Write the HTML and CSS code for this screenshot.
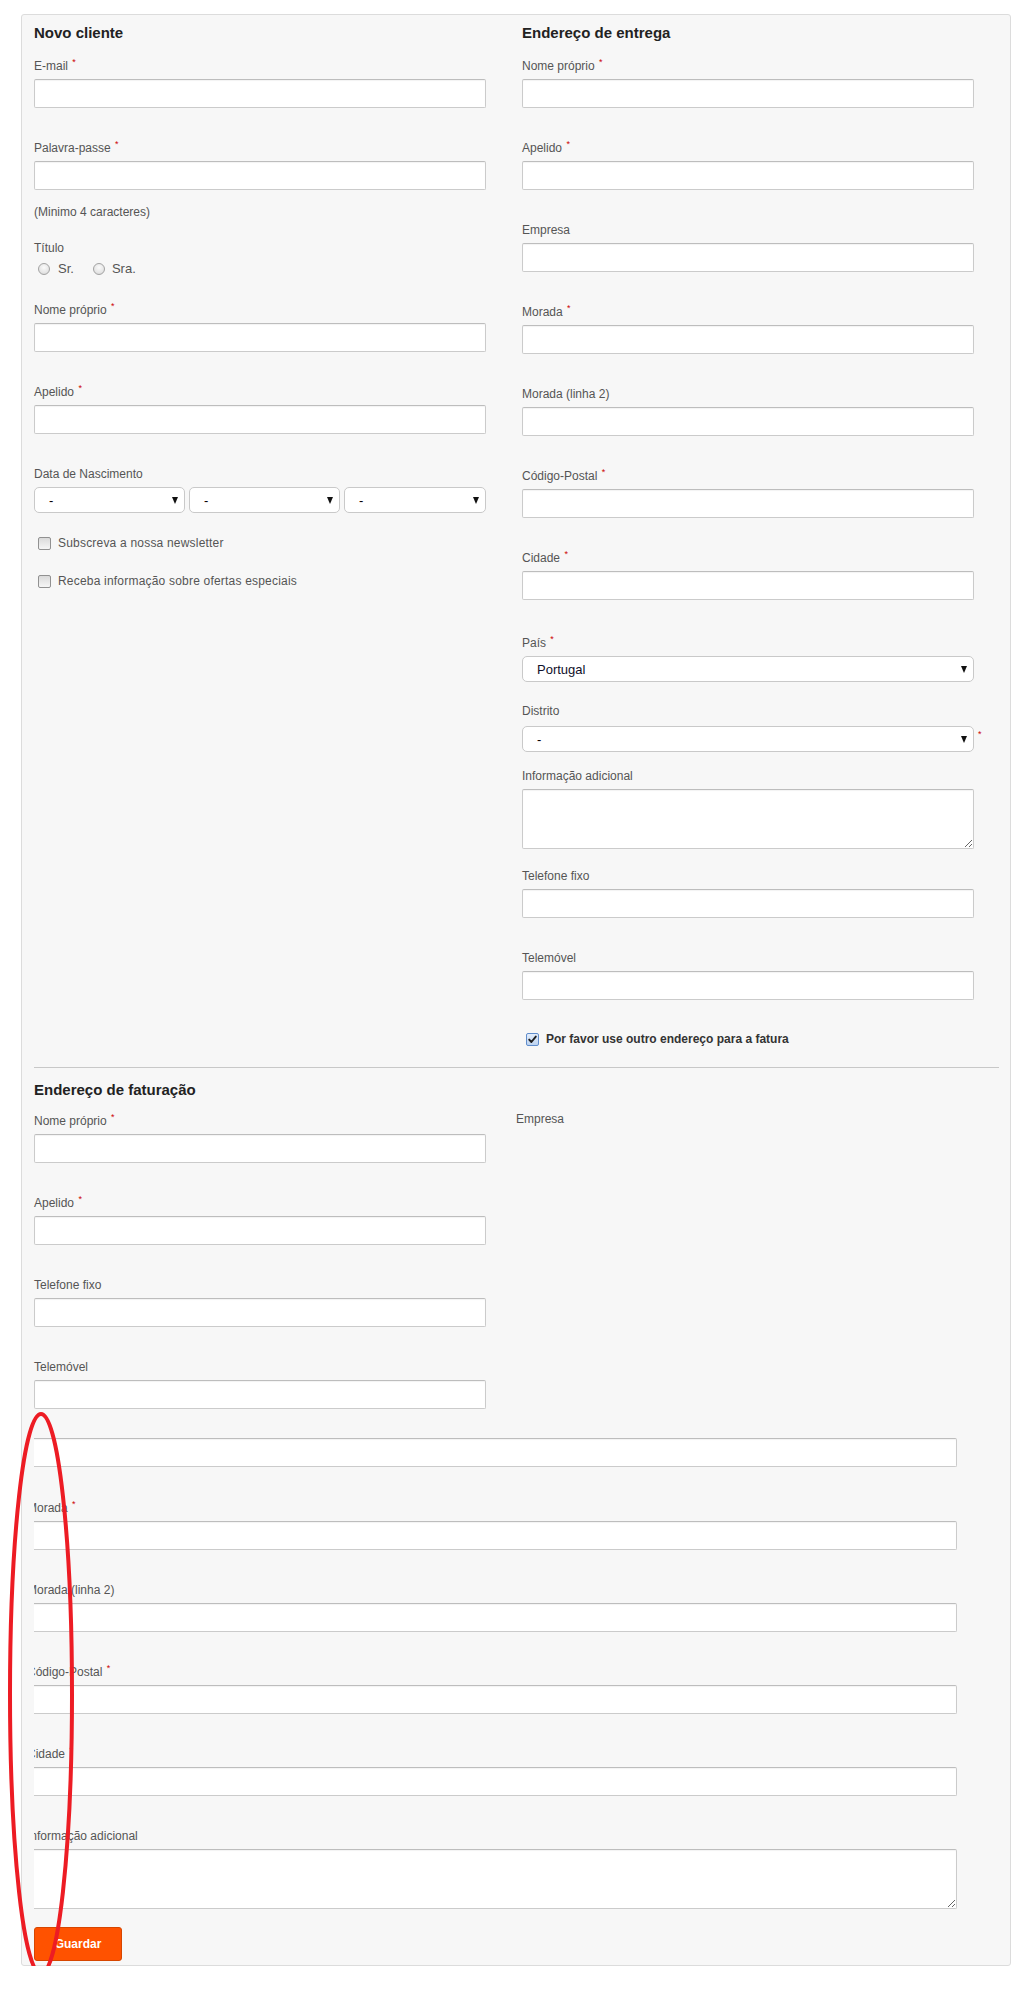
FILE: index.html
```html
<!DOCTYPE html>
<html lang="pt">
<head>
<meta charset="utf-8">
<title>Registo</title>
<link rel="stylesheet" href="styles.css">
</head>
<body>
<div class="page">
  <form class="box">
    <div class="cols">
      <div class="col">
        <h3 class="ttl">Novo cliente</h3>
        <div class="fld"><label class="lbl">E-mail <sup class="req">*</sup></label><input class="inp" type="text"></div>
        <div class="fld fld-tight"><label class="lbl">Palavra-passe <sup class="req">*</sup></label><input class="inp" type="password"></div>
        <p class="hint">(Minimo 4 caracteres)</p>
        <div class="titulo">
          <span class="lbl">Título</span>
          <div class="radios">
            <span class="rad"></span><span class="rtxt">Sr.</span>
            <span class="rad rad-2"></span><span class="rtxt rtxt-2">Sra.</span>
          </div>
        </div>
        <div class="fld fld-after-radios"><label class="lbl">Nome próprio <sup class="req">*</sup></label><input class="inp" type="text"></div>
        <div class="fld"><label class="lbl">Apelido <sup class="req">*</sup></label><input class="inp" type="text"></div>
        <div class="fld-date">
          <label class="lbl">Data de Nascimento</label>
          <div class="dates">
            <div class="sel-wrap sel-d1"><select class="sel"><option>-</option></select></div>
            <div class="sel-wrap sel-d2"><select class="sel"><option>-</option></select></div>
            <div class="sel-wrap sel-d3"><select class="sel"><option>-</option></select></div>
          </div>
        </div>
        <div class="chk-row"><span class="cb"></span><span class="chk-txt">Subscreva a nossa newsletter</span></div>
        <div class="chk-row"><span class="cb"></span><span class="chk-txt">Receba informação sobre ofertas especiais</span></div>
      </div>

      <div class="col">
        <h3 class="ttl">Endereço de entrega</h3>
        <div class="fld"><label class="lbl">Nome próprio <sup class="req">*</sup></label><input class="inp" type="text"></div>
        <div class="fld"><label class="lbl">Apelido <sup class="req">*</sup></label><input class="inp" type="text"></div>
        <div class="fld"><label class="lbl">Empresa</label><input class="inp" type="text"></div>
        <div class="fld"><label class="lbl">Morada <sup class="req">*</sup></label><input class="inp" type="text"></div>
        <div class="fld"><label class="lbl">Morada (linha 2)</label><input class="inp" type="text"></div>
        <div class="fld"><label class="lbl">Código-Postal <sup class="req">*</sup></label><input class="inp" type="text"></div>
        <div class="fld fld-before-sel"><label class="lbl">Cidade <sup class="req">*</sup></label><input class="inp" type="text"></div>
        <div class="fld-sel">
          <label class="lbl">País <sup class="req">*</sup></label>
          <div class="sel-wrap"><select class="sel sel-big"><option>Portugal</option></select></div>
        </div>
        <div class="fld-sel fld-sel-2">
          <label class="lbl">Distrito</label>
          <div class="sel-line">
            <div class="sel-wrap"><select class="sel"><option>-</option></select></div>
            <span class="req-out">*</span>
          </div>
        </div>
        <div class="fld-txt">
          <label class="lbl">Informação adicional</label>
          <textarea class="txt"></textarea>
        </div>
        <div class="fld fld-after-txt"><label class="lbl">Telefone fixo</label><input class="inp" type="text"></div>
        <div class="fld fld-last-r"><label class="lbl">Telemóvel</label><input class="inp" type="text"></div>
        <div class="chk-row chk-row-r">
          <span class="cb cb-on"><svg viewBox="0 0 11 11" width="11" height="11"><path d="M2.2 5.6 L4.4 8 L8.8 2.6" fill="none" stroke="#1e1e1e" stroke-width="1.9" stroke-linecap="round" stroke-linejoin="round"/></svg></span>
          <span class="chk-txt chk-bold">Por favor use outro endereço para a fatura</span>
        </div>
      </div>
    </div>

    <hr class="sep">

    <h3 class="ttl ttl-2">Endereço de faturação</h3>
    <div class="cols">
      <div class="col">
        <div class="fld"><label class="lbl">Nome próprio <sup class="req">*</sup></label><input class="inp" type="text"></div>
        <div class="fld"><label class="lbl">Apelido <sup class="req">*</sup></label><input class="inp" type="text"></div>
        <div class="fld"><label class="lbl">Telefone fixo</label><input class="inp" type="text"></div>
        <div class="fld fld-end"><label class="lbl">Telemóvel</label><input class="inp" type="text"></div>
      </div>
      <div class="col">
        <span class="lbl lbl-empresa">Empresa</span>
      </div>
    </div>

    <div class="clip">
      <div class="clip-in">
        <input class="inp inp-first" type="text">
        <div class="fld"><label class="lbl">Morada <sup class="req">*</sup></label><input class="inp" type="text"></div>
        <div class="fld"><label class="lbl">Morada (linha 2)</label><input class="inp" type="text"></div>
        <div class="fld"><label class="lbl">Código-Postal <sup class="req">*</sup></label><input class="inp" type="text"></div>
        <div class="fld"><label class="lbl">Cidade <sup class="req">*</sup></label><input class="inp" type="text"></div>
        <div class="fld-txt-b"><label class="lbl">Informação adicional</label><textarea class="txt"></textarea></div>
      </div>
    </div>

    <button class="btn" type="button">Guardar</button>
  </form>

  <svg class="mark" viewBox="0 0 90 580" width="90" height="580">
    <ellipse cx="41" cy="289" rx="31" ry="280" fill="none" stroke="#ed1c24" stroke-width="4"/>
  </svg>
</div>
</body>
</html>
```

FILE: styles.css
```css
* { box-sizing: border-box; }

html, body {
  margin: 0;
  padding: 0;
  background: #fff;
}

body {
  font-family: "Liberation Sans", Arial, Helvetica, sans-serif;
  font-size: 12px;
  color: #555;
}

.page {
  position: relative;
  padding-top: 14px;
}

.box {
  width: 990px;
  margin: 0 0 0 21px;
  padding: 9px 11px 4px 12px;
  background: #f7f7f7;
  border: 1px solid #dcdcdc;
  border-radius: 3px;
}

.cols {
  display: grid;
  grid-template-columns: 488px 477px;
  align-items: start;
}

.ttl {
  margin: 0 0 16px;
  font-size: 15px;
  line-height: 18px;
  font-weight: bold;
  color: #222;
}

.ttl-2 { margin-bottom: 14px; }

.lbl {
  display: block;
  font-size: 12px;
  line-height: 16px;
  color: #555;
  margin: 0 0 5px;
  white-space: nowrap;
}

.req {
  color: #c00;
  font-size: 9px;
  line-height: 0;
  vertical-align: 5px;
  margin-left: 1px;
}

.inp {
  display: block;
  width: 452px;
  height: 29px;
  margin: 0;
  padding: 0 6px;
  border: 1px solid #cbcbcb;
  border-top-color: #bdbdbd;
  border-radius: 2px;
  background: #fff;
  box-shadow: inset 0 1px 1px rgba(0, 0, 0, 0.05);
  font: inherit;
}

.fld { margin-bottom: 32px; }
.fld-tight { margin-bottom: 0; }

.hint {
  margin: 14px 0 0;
  line-height: 16px;
  font-size: 12px;
  color: #555;
}

.titulo { margin-top: 20px; }

.radios {
  display: flex;
  align-items: center;
  height: 16px;
  margin-top: 2px;
  padding-left: 4px;
}

.rad {
  width: 12px;
  height: 12px;
  border-radius: 50%;
  border: 1px solid #a3a3a3;
  background: radial-gradient(circle at 50% 35%, #fbfbfb 0%, #e6e6e6 60%, #d2d2d2 100%);
  flex: none;
}

.rtxt {
  margin-left: 8px;
  font-size: 13px;
  line-height: 16px;
  color: #555;
}

.rad-2 { margin-left: 19px; }
.rtxt-2 { margin-left: 7px; }

.fld-after-radios { margin-top: 25px; }

.fld-date .dates {
  display: flex;
  gap: 4px;
  margin-top: 2px;
}

.sel-wrap {
  position: relative;
  width: 452px;
}

.sel-wrap::after {
  content: "";
  position: absolute;
  right: 7px;
  top: 50%;
  margin-top: -3px;
  width: 0;
  height: 0;
  border-left: 3.5px solid transparent;
  border-right: 3.5px solid transparent;
  border-top: 7px solid #111;
  pointer-events: none;
}

.sel-d1, .sel-d2 { width: 151px; }
.sel-d3 { width: 142px; }

.sel {
  -webkit-appearance: none;
  appearance: none;
  display: block;
  width: 100%;
  height: 26px;
  margin: 0;
  padding: 0 20px 0 14px;
  border: 1px solid #c9c9c9;
  border-radius: 5px;
  background: #fff;
  font-family: "Liberation Sans", Arial, Helvetica, sans-serif;
  font-size: 13px;
  color: #000;
}

.sel-big { color: #10102a; }

.chk-row {
  display: flex;
  align-items: center;
  height: 16px;
  margin-top: 22px;
  padding-left: 4px;
}

.cb {
  width: 13px;
  height: 13px;
  flex: none;
  border: 1px solid #919191;
  border-radius: 2px;
  background: linear-gradient(#dadada, #f6f6f6);
  display: flex;
  align-items: center;
  justify-content: center;
}

.cb-on {
  border-color: #5f8ccb;
  background: linear-gradient(#e4eefb, #bcd2ef);
}

.cb-on svg { display: block; }

.chk-txt {
  margin-left: 7px;
  font-size: 12px;
  line-height: 16px;
  color: #555;
  letter-spacing: 0.2px;
}

.chk-bold {
  font-weight: bold;
  color: #333;
  letter-spacing: 0;
}

/* right column specifics */
.fld-before-sel { margin-bottom: 35px; }

.fld-sel .sel-wrap { margin-top: 2px; }
.fld-sel-2 { margin-top: 21px; }

.sel-line {
  display: flex;
  align-items: flex-start;
}

.req-out {
  margin: 6px 0 0 4px;
  color: #c00;
  font-size: 9px;
  line-height: 9px;
}

.fld-txt { margin-top: 16px; }

.txt {
  display: block;
  width: 452px;
  height: 60px;
  margin: 1px 0 0;
  padding: 4px 6px;
  border: 1px solid #cbcbcb;
  border-top-color: #bdbdbd;
  border-radius: 2px;
  background: #fff;
  box-shadow: inset 0 1px 1px rgba(0, 0, 0, 0.05);
  font: inherit;
  resize: both;
}

.fld-after-txt { margin-top: 19px; }
.fld-last-r { margin-bottom: 0; }
.chk-row-r { margin-top: 31px; }

.sep {
  height: 0;
  border: 0;
  border-top: 1px solid #c8c8c8;
  margin: 20px 0 13px;
}

.fld-end { margin-bottom: 0; }

.lbl-empresa {
  margin-left: -6px;
  margin-top: -2px;
}

.clip {
  width: 923px;
  overflow: hidden;
  margin-top: 29px;
}

.clip-in { margin-left: -7px; }

.clip .inp,
.clip .txt { width: 100%; }

.inp-first { margin-bottom: 33px; }

.fld-txt-b .txt { margin-top: 0; }

.btn {
  display: block;
  width: 88px;
  height: 34px;
  margin-top: 18px;
  padding: 0;
  border: 1px solid #d64600;
  border-radius: 3px;
  background: #ff5200;
  color: #fff;
  font-family: "Liberation Sans", Arial, Helvetica, sans-serif;
  font-size: 12px;
  font-weight: bold;
}

.mark {
  position: absolute;
  left: 0;
  top: 1405px;
  pointer-events: none;
}
```
